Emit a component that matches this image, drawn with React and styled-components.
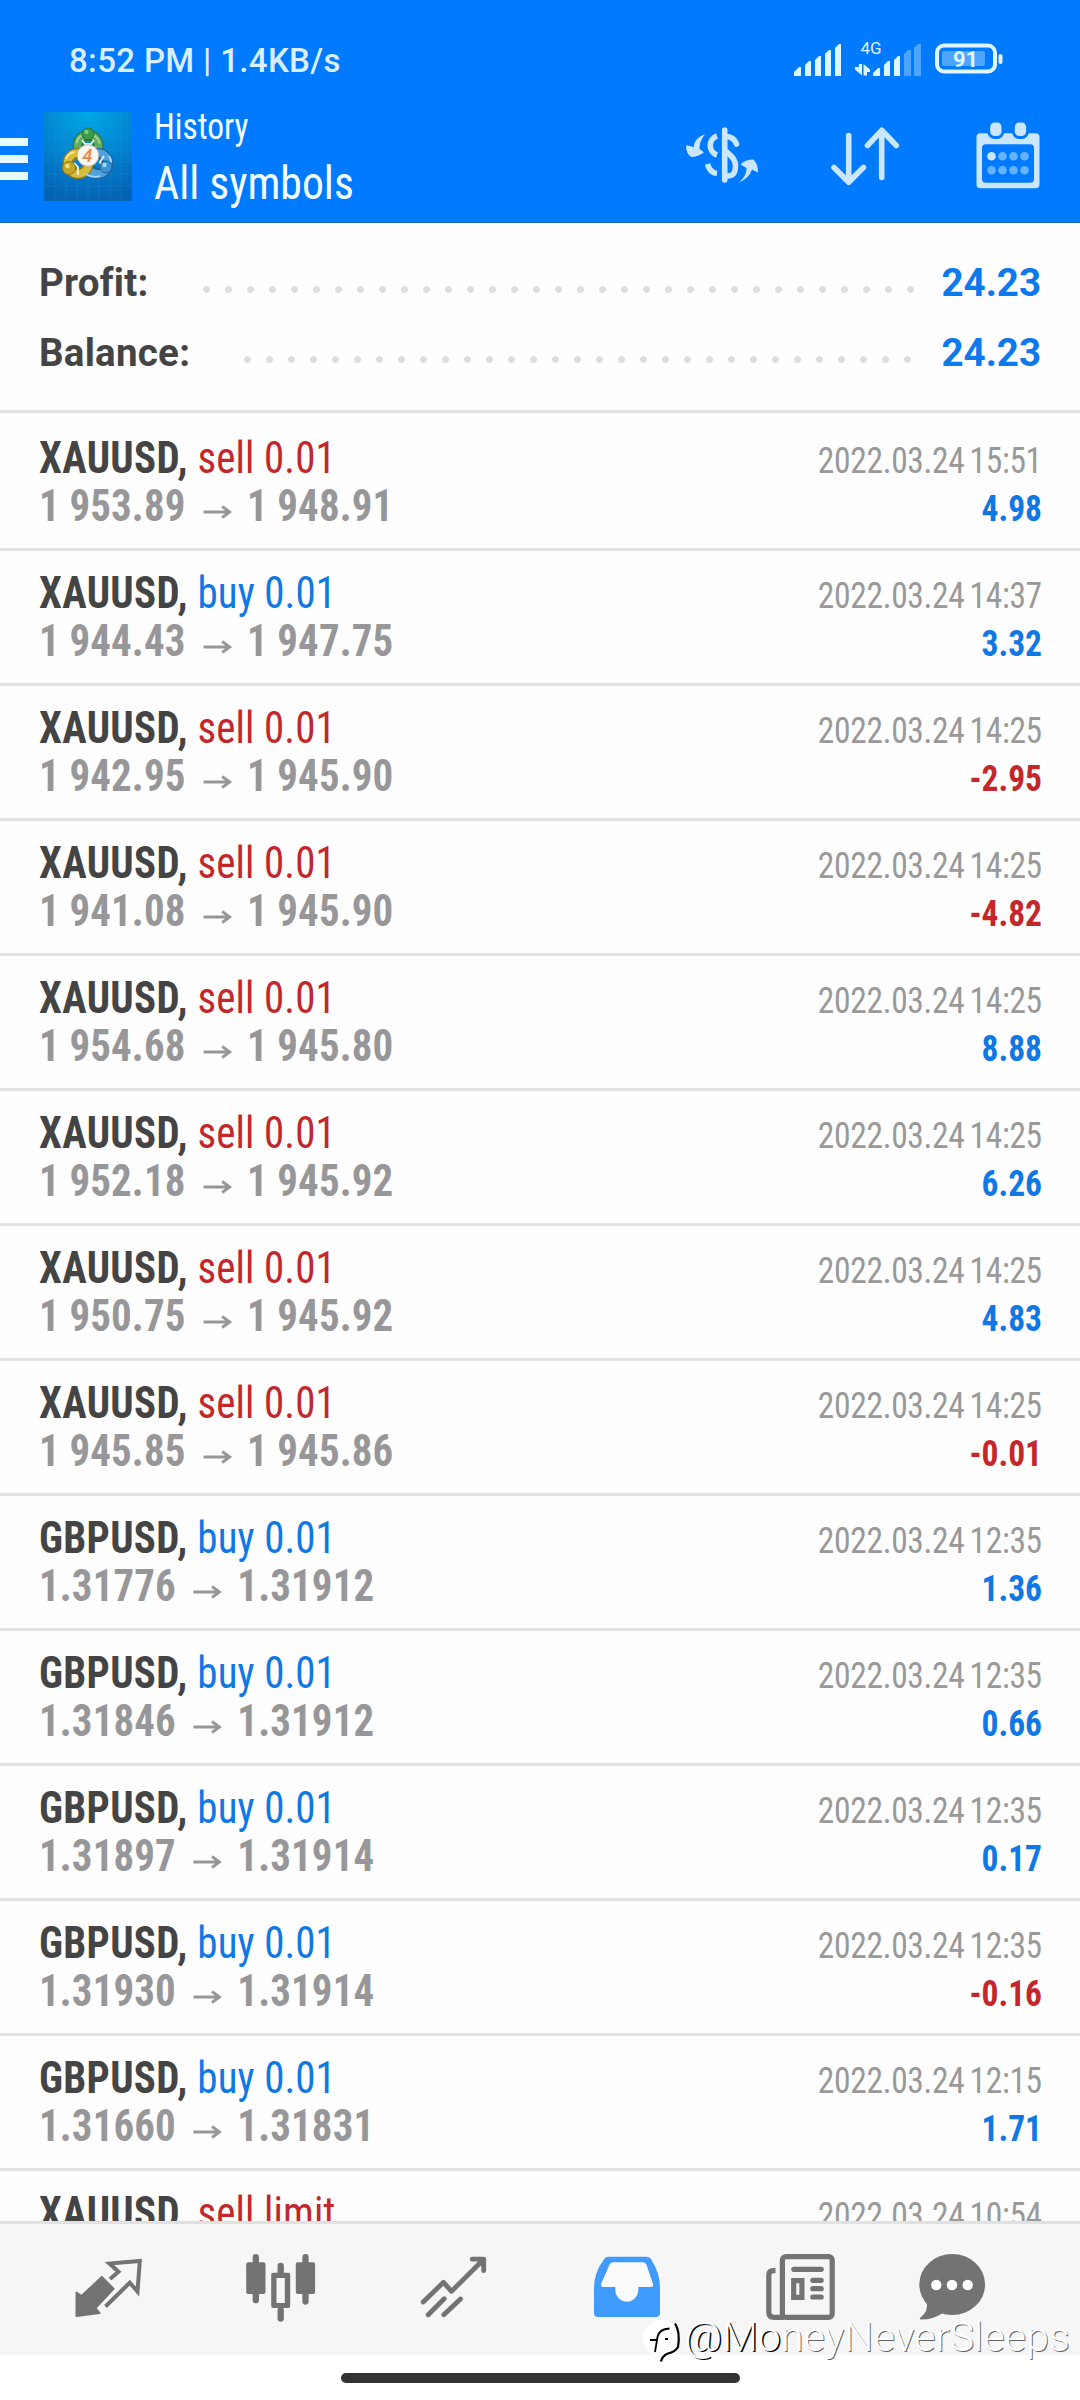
import React from 'react';
import styled, { createGlobalStyle } from 'styled-components';

const GlobalStyle = createGlobalStyle`
  * {
    box-sizing: border-box;
  }

  body {
    margin: 0;
    background-color: #fff;
    font-family: Roboto, sans-serif;
  }

  svg {
    overflow: visible;
  }
`;

const Screen = styled.div`
  position: relative;
  display: flex;
  flex-direction: column;
  width: 1080px;
  height: 2400px;
  overflow: hidden;
  background-color: #fefefe;
`;

const Header = styled.header`
  display: flex;
  flex-direction: column;
  height: 223px;
  background-color: #007aff;
  border-bottom: 1px solid #1767b8;
`;

const StatusBar = styled.div`
  display: flex;
  justify-content: space-between;
  align-items: center;
  height: 100px;
  padding: 20px 76px 0 69px;
`;

const Clock = styled.span`
  font-size: 33px;
  font-weight: 500;
  letter-spacing: 0.35px;
  color: #d9efff;
`;

const Toolbar = styled.div`
  display: flex;
  align-items: flex-start;
  flex: 1;
  padding-right: 34px;
`;

const MenuButton = styled.div`
  display: flex;
  flex-direction: column;
  gap: 9px;
  width: 28px;
  margin: 38px 16px 0 0;
`;

const MenuLine = styled.span`
  height: 8px;
  background-color: #e6fbff;
`;

const LogoBox = styled.div`
  display: flex;
  margin: 12px 22px 0 0;
`;

const Titles = styled.div`
  display: flex;
  flex-direction: column;
  flex: 1;
  font-family: 'Roboto Condensed', Roboto, sans-serif;
  font-weight: 430;
  color: #f4ffff;
  transform: scaleX(0.93);
  transform-origin: left;
`;

const Title = styled.span`
  margin-top: 5px;
  font-size: 36px;
  line-height: 44px;
`;

const Subtitle = styled.span`
  font-size: 47px;
  line-height: 68px;
`;

const Actions = styled.div`
  display: flex;
  gap: 67px;
  margin-top: 18px;
`;

const Summary = styled.section`
  height: 190px;
  padding-top: 24px;
  border-bottom: 3px solid #e3e3e3;
`;

const SummaryRow = styled.div`
  display: flex;
  align-items: center;
  height: 70px;
  padding: 0 39px;
  font-size: 38.5px;
  font-weight: 700;
  color: #444;
`;

const SummaryLabel = styled.span`
  letter-spacing: 0.25px;
`;

const Dots = styled.span`
  flex: 1;
  height: 7px;
  margin: 14px 20px 0 54px;
  background: radial-gradient(circle at 3.5px 3.5px, #dedede 3px, transparent 3.8px) 0 0 / 22px 7px
    repeat-x;
`;

const SummaryValue = styled.span`
  color: #0c79ec;
`;

const List = styled.main`
  flex: 1;
  min-height: 0;
  padding-top: 3px;
  overflow: hidden;
`;

const Deal = styled.div`
  height: 135px;
  padding: 18px 38px 0 39px;
  border-bottom: 3px solid #e3e3e3;
  font-family: 'Roboto Condensed', Roboto, sans-serif;
`;

const DealLine = styled.div`
  display: flex;
  justify-content: space-between;
  align-items: baseline;
  height: 48px;
  line-height: 48px;
  white-space: pre;
`;

const Narrow = styled.span`
  transform: scaleX(0.93);
  transform-origin: ${({ $right }) => ($right ? 'right' : 'left')};
`;

const Symbol = styled(Narrow)`
  font-size: 44px;
  font-weight: 700;
  letter-spacing: 0.35px;
  color: #444;
`;

const Order = styled.span`
  font-weight: 430;
  letter-spacing: 0.1px;
  color: ${({ $side }) => ($side === 'buy' ? '#0f78e4' : '#c3272b')};
`;

const Prices = styled(Narrow)`
  display: flex;
  align-items: baseline;
  font-size: 44px;
  font-weight: 700;
  letter-spacing: 0.15px;
  color: #979799;
`;

const Arrow = styled.svg`
  position: relative;
  top: 6px;
  align-self: center;
  width: 30px;
  height: 14px;
  margin: 0 17px 0 19px;
`;

const Time = styled(Narrow)`
  font-size: 36px;
  font-weight: 430;
  letter-spacing: -0.35px;
  word-spacing: -2.5px;
  color: #999;
`;

const Profit = styled(Narrow)`
  font-size: 36px;
  font-weight: 700;
  color: ${({ $loss }) => ($loss ? '#c3272b' : '#0f78e4')};
`;

const TabBar = styled.nav`
  display: grid;
  grid-template-columns: repeat(5, 173px) 130px;
  justify-items: center;
  height: 134px;
  padding: 24px 0 0 21px;
  border-top: 3px solid #e1e1e1;
  background-color: #f6f6f6;
`;

const GestureArea = styled.div`
  display: flex;
  justify-content: center;
  height: 45px;
  padding-top: 18px;
  background-color: #fff;
`;

const GesturePill = styled.div`
  width: 399px;
  height: 10px;
  border-radius: 5px;
  background-color: #333;
`;

const Watermark = styled.div`
  position: absolute;
  right: 10px;
  bottom: 36px;
  display: flex;
  align-items: center;
  gap: 2px;
  font-size: 41px;
  font-weight: 300;
  letter-spacing: 0.15px;
  line-height: 54px;
  color: #fff;
  text-shadow: 1px 1px 0 rgba(0, 0, 0, 0.6);
`;

const Strong = styled.span`
  text-shadow: 1.5px 1px 0 #000;
`;

const deals = [
  ['XAUUSD', 'sell', '0.01', '1 953.89', '1 948.91', '15:51', '4.98'],
  ['XAUUSD', 'buy', '0.01', '1 944.43', '1 947.75', '14:37', '3.32'],
  ['XAUUSD', 'sell', '0.01', '1 942.95', '1 945.90', '14:25', '-2.95'],
  ['XAUUSD', 'sell', '0.01', '1 941.08', '1 945.90', '14:25', '-4.82'],
  ['XAUUSD', 'sell', '0.01', '1 954.68', '1 945.80', '14:25', '8.88'],
  ['XAUUSD', 'sell', '0.01', '1 952.18', '1 945.92', '14:25', '6.26'],
  ['XAUUSD', 'sell', '0.01', '1 950.75', '1 945.92', '14:25', '4.83'],
  ['XAUUSD', 'sell', '0.01', '1 945.85', '1 945.86', '14:25', '-0.01'],
  ['GBPUSD', 'buy', '0.01', '1.31776', '1.31912', '12:35', '1.36'],
  ['GBPUSD', 'buy', '0.01', '1.31846', '1.31912', '12:35', '0.66'],
  ['GBPUSD', 'buy', '0.01', '1.31897', '1.31914', '12:35', '0.17'],
  ['GBPUSD', 'buy', '0.01', '1.31930', '1.31914', '12:35', '-0.16'],
  ['GBPUSD', 'buy', '0.01', '1.31660', '1.31831', '12:15', '1.71'],
  ['XAUUSD', 'sell', 'limit', null, null, '10:54', null],
];

const StatusIcons = () => (
  <svg width="210" height="36" viewBox="0 0 210 36">
    <g fill="#def6ff">
      <path d="M0 34v-4l5-5h2v9zM11 34V23l4-4h2v15zM21 34V18l4-4h2v20zM31 34V12l4-4h2v26zM41 34V6l4-4h2v32z" />
      <path d="M79 34v-3l5-5h2v8zM90 34V23l4-4h2v15zM100 34V18l4-4h2v20z" />
      <path opacity=".35" d="M110 34V12l4-4h3v26zM120 34V6l4-4h3v32z" />
      <path d="M65 22h3v11.500l-7-6V25h4zM69.500 33.500V22l6.500 5.500V30h-3v3.500z" />
      <text x="66.500" y="12" fontFamily="Roboto" fontSize="17" fontWeight="400">
        4G
      </text>
      <rect x="148" y="9" width="43" height="15" rx="2" opacity=".35" />
      <rect x="204.500" y="12" width="4" height="10" rx="2" />
      <text x="159" y="25" fontFamily="Roboto" fontSize="22" fontWeight="700">
        91
      </text>
    </g>
    <rect x="143" y="3.500" width="58" height="26" rx="7" fill="none" stroke="#def6ff" strokeWidth="4" />
  </svg>
);

const Logo = () => (
  <svg width="88" height="89" viewBox="0 0 88 89">
    <defs>
      <radialGradient id="sky" cx=".5" cy="0" r="1">
        <stop offset="0" stopColor="#00a9e6" />
        <stop offset=".55" stopColor="#0283d0" />
        <stop offset="1" stopColor="#0562b4" />
      </radialGradient>
    </defs>
    <rect width="88" height="89" fill="url(#sky)" />
    <path
      d="M11 0v89M22 0v89M33 0v89M44 0v89M55 0v89M66 0v89M77 0v89M0 14h88M0 26h88M0 38h88M0 50h88M0 62h88M0 74h88"
      stroke="#3fb6ea"
      strokeOpacity=".14"
    />
    <g fill="none">
      <circle cx="44" cy="33.500" r="10" stroke="#2c7a3a" strokeWidth="11" />
      <circle cx="44" cy="33.500" r="10.500" stroke="#63ad62" strokeWidth="7.500" />
      <circle cx="54" cy="51.500" r="10" stroke="#1f639d" strokeWidth="11" />
      <circle cx="54" cy="51.500" r="10.500" stroke="#4ea3dc" strokeWidth="7.500" />
      <circle cx="34" cy="51.500" r="10" stroke="#8f7a20" strokeWidth="11" />
      <circle cx="34" cy="51.500" r="10.500" stroke="#d8bd3c" strokeWidth="7.500" />
      <path d="M32.500 31q1.500-6.500 7-8.500M48 22.500q6 2 7.500 9" stroke="#a6dba0" strokeWidth="1.800" />
      <path d="M21.500 47q3-6 9-7" stroke="#f6e791" strokeWidth="1.800" />
      <path d="M42 62q6 4.500 14 2M65 44q2 3 2 6" stroke="#a3dbf7" strokeWidth="1.800" />
      <path d="M38 28l3 4h6l3-4M30 51l4 4v8M60 44l-4 6 2 4" stroke="#eef5e2" strokeWidth="1.800" />
    </g>
    <circle cx="44" cy="22" r="6" fill="#3b9a4b" stroke="#257038" />
    <circle cx="42.500" cy="20" r="2.200" fill="#7ccb7b" />
    <circle cx="25" cy="56" r="6.500" fill="#c4a727" stroke="#8f7a20" />
    <circle cx="23.500" cy="54" r="2.300" fill="#f1df82" />
    <circle cx="62" cy="55" r="6" fill="#3b93d6" stroke="#235f9d" />
    <circle cx="60.500" cy="53" r="2.200" fill="#a5dcf8" />
    <circle cx="44" cy="43.500" r="10.800" fill="#fbf5ef" stroke="#a9aaa0" strokeWidth=".8" />
    <text
      x="43.500"
      y="50"
      textAnchor="middle"
      fontFamily="Roboto"
      fontSize="18"
      fontStyle="italic"
      fontWeight="500"
      fill="#e8894a"
    >
      4
    </text>
  </svg>
);

const CurrencyIcon = () => (
  <svg width="76" height="76" viewBox="0 0 76 76">
    <g fill="none" stroke="#cbe6ff" strokeWidth="5.600">
      <path strokeLinecap="round" d="M40.700 12v50M41 18.500c6 0 10 3 11.500 7.500" />
      <path d="M41 32c2 4 10.500 6 10.500 15.500S48 58 41 58" />
      <path d="M33 18c-9 3-9 16 0 19" />
      <path d="M23.500 46c1.500 6 5 9 9.500 9.500" />
    </g>
    <g fill="#cbe6ff">
      <path d="M21 16.300C14 19 10 23 10 29L2 27.300Q2 36 7.300 39Q14 39 20 34.300L15.500 31Q15 24 21 16.300z" />
      <path d="M54.700 64.700C60 60 62.500 56 62.500 50L56.500 46.500Q61 41.500 69.500 41.500Q74 46 74 54.500L68 51.500Q65 60.500 54.700 64.700z" />
    </g>
  </svg>
);

const SortIcon = () => (
  <svg width="76" height="76" viewBox="0 0 76 76">
    <path
      d="M21.700 17.500V64M7 49.500l14.700 14.800 14.700-14.800M54.700 59.500V13M40.500 27.500l14.200-15.200 14.600 15.200"
      fill="none"
      stroke="#cbe6ff"
      strokeWidth="5.600"
      strokeLinecap="round"
      strokeLinejoin="round"
    />
  </svg>
);

const CalendarIcon = () => (
  <svg width="76" height="76" viewBox="0 0 76 76">
    <path
      fill="#cbe6ff"
      fillRule="evenodd"
      d="M10.500 15.300h55a4 4 0 0 1 4 4v47a4 4 0 0 1-4 4h-55a4 4 0 0 1-4-4v-47a4 4 0 0 1 4-4zM16 26.300a4 4 0 0 0-4 4v30.400a4 4 0 0 0 4 4h44a4 4 0 0 0 4-4V30.300a4 4 0 0 0-4-4z"
    />
    <rect x="18.700" y="3" width="14.300" height="16.500" rx="6" fill="#cbe6ff" stroke="#007aff" strokeWidth="3" />
    <rect x="43.300" y="3" width="14.300" height="16.500" rx="6" fill="#cbe6ff" stroke="#007aff" strokeWidth="3" />
    {[38.3, 52.3].map((y) =>
      [21.5, 32.5, 43.5, 54.5].map((x) => (
        <circle key={`${x}-${y}`} cx={x} cy={y} r="4.300" fill={x === 21.5 && y === 38.3 ? '#cbe6ff' : '#66b2ff'} />
      ))
    )}
  </svg>
);

const TabIcon = ({ color = '#737373', children }) => (
  <svg width="76" height="76" viewBox="0 0 76 76" fill={color} stroke={color} strokeWidth="0">
    {children}
  </svg>
);

const QuotesIcon = () => (
  <TabIcon>
    <path strokeWidth="2" strokeLinejoin="round" d="M31.800 29l11.700 11.700L25.500 60l4 5L6.500 68V44.500l5 3.500z" />
    <path fill="none" strokeWidth="4" d="M40 31l8.500-7.300-9-8.200L69.800 13l-2.300 30.500-7.700-8.800L35.500 58.500" />
  </TabIcon>
);

const ChartIcon = () => (
  <TabIcon>
    <rect x="3.200" y="14.300" width="19.300" height="31.700" rx="2" />
    <rect x="52.800" y="14.300" width="19.300" height="31.700" rx="2" />
    <path fillRule="evenodd" d="M30.200 24.700h15a2 2 0 0 1 2 2V58a2 2 0 0 1-2 2h-15a2 2 0 0 1-2-2V26.700a2 2 0 0 1 2-2zM33.500 30v25h8.300V30z" />
    <path strokeWidth="6.300" strokeLinecap="round" d="M12.800 9.200v43M62.500 9.200v44.300M37.700 18v6M37.700 62v8.500" />
  </TabIcon>
);

const TradeIcon = () => (
  <TabIcon>
    <path
      fill="none"
      strokeWidth="4.800"
      strokeLinecap="round"
      strokeLinejoin="round"
      d="M7.200 54l20.300-19.700 8 9L67 12M56.200 11.200h11.500v11.500M12.200 66.700l16-16M27.800 66.700L44.500 51"
    />
  </TabIcon>
);

const HistoryIcon = () => (
  <TabIcon color="#409bff">
    <path d="M20 8.700h37q4 0 5.500 3.300Q71 25 71 40v25q0 4-4 4H9q-4 0-4-4V40Q5 25 14.500 12q1.500-3.300 5.500-3.300z" />
    <path fill="#fbfbfb" d="M24 14.300h30q2.500 0 3.500 2.500L64 36q.7 3-2 3H49.300v3a11.500 11.500 0 0 1-23 0v-3H14q-2.700 0-2-3l8.500-19.200q1-2.500 3.500-2.500z" />
  </TabIcon>
);

const NewsIcon = () => (
  <TabIcon>
    <g fill="none" strokeWidth="5.200" strokeLinecap="round">
      <rect x="20.400" y="8.600" width="49.800" height="60.800" rx="3.500" />
      <path strokeLinecap="butt" d="M13.500 22.600h-2q-4.700 0-4.700 4.700v37q0 5 5 5h10" />
      <path d="M31.800 21.300h27.400M50.800 32.300h8.400M50.800 40.700h8.400M50.800 49h8.400" />
      <rect x="31.700" y="32.600" width="8.200" height="16.800" />
    </g>
  </TabIcon>
);

const ChatIcon = () => (
  <TabIcon>
    <ellipse cx="39.200" cy="36.500" rx="32.900" ry="30.500" />
    <path d="M13.500 54q2.500 9-6.500 16-1 1.500 1 1.600 11 .4 22-6.600z" />
    <g fill="#fff">
      <circle cx="23.300" cy="37" r="5.200" />
      <circle cx="39" cy="37" r="5.200" />
      <circle cx="54.700" cy="37" r="5.200" />
    </g>
  </TabIcon>
);

const WatermarkLogo = () => (
  <svg width="40" height="44" viewBox="0 0 40 44">
    <circle cx="18" cy="23" r="18" fill="#fff" />
    <path d="M12 37l2.500-15q1.500-8 12-8.500M7 25h7M22 24h3" fill="none" stroke="#000" strokeWidth="1.800" />
    <path d="M32 8.500q5.500 8.500 3 23.500-3 5-10 6.500-6 2.500-7 8" fill="none" stroke="#000" strokeWidth="2.200" />
  </svg>
);

const DealRow = ({ deal }) => {
  const [symbol, side, volume, open, close, time, profit] = deal;

  return (
    <Deal>
      <DealLine>
        <Symbol>
          {symbol}, <Order $side={side}>{`${side} ${volume}`}</Order>
        </Symbol>
        <Time $right>2022.03.24 {time}</Time>
      </DealLine>
      {open && (
        <DealLine>
          <Prices>
            {open}
            <Arrow viewBox="0 0 30 14">
              <path d="M0 7h27M20 1.500L28 7l-8 5.500" fill="none" stroke="#979799" strokeWidth="3" />
            </Arrow>
            {close}
          </Prices>
          <Profit $right $loss={profit.startsWith('-')}>
            {profit}
          </Profit>
        </DealLine>
      )}
    </Deal>
  );
};

const App = () => (
  <>
    <GlobalStyle />
    <Screen>
      <Header>
        <StatusBar>
          <Clock>8:52 PM | 1.4KB/s</Clock>
          <StatusIcons />
        </StatusBar>
        <Toolbar>
          <MenuButton>
            <MenuLine />
            <MenuLine />
            <MenuLine />
          </MenuButton>
          <LogoBox>
            <Logo />
          </LogoBox>
          <Titles>
            <Title>History</Title>
            <Subtitle>All symbols</Subtitle>
          </Titles>
          <Actions>
            <CurrencyIcon />
            <SortIcon />
            <CalendarIcon />
          </Actions>
        </Toolbar>
      </Header>
      <Summary>
        <SummaryRow>
          <SummaryLabel>Profit:</SummaryLabel>
          <Dots />
          <SummaryValue>24.23</SummaryValue>
        </SummaryRow>
        <SummaryRow>
          <SummaryLabel>Balance:</SummaryLabel>
          <Dots />
          <SummaryValue>24.23</SummaryValue>
        </SummaryRow>
      </Summary>
      <List>
        {deals.map((deal, i) => (
          <DealRow key={i} deal={deal} />
        ))}
      </List>
      <TabBar>
        <QuotesIcon />
        <ChartIcon />
        <TradeIcon />
        <HistoryIcon />
        <NewsIcon />
        <ChatIcon />
      </TabBar>
      <GestureArea>
        <GesturePill />
      </GestureArea>
      <Watermark>
        <WatermarkLogo />
        <span>
          <Strong>@Mo</Strong>neyNeverSleeps
        </span>
      </Watermark>
    </Screen>
  </>
);

export default App;
